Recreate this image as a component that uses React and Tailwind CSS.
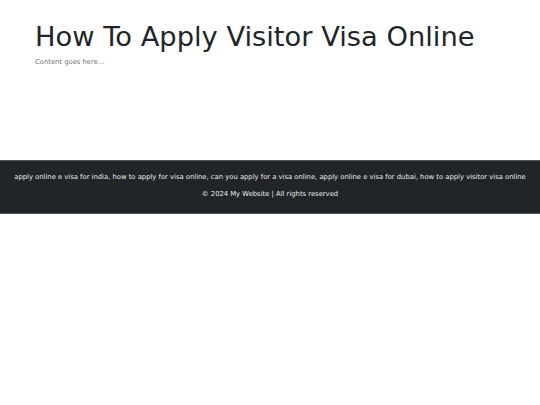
export default function App() {
  return (
    <div className="bg-white" style={{ fontFamily: '"DejaVu Sans", Verdana, sans-serif' }}>
      <main className="px-[35px] pt-[20px] h-[160px]">
        <h1 className="text-[27.3px] leading-[34px] text-[#212529] font-normal">How To Apply Visitor Visa Online</h1>
        <p className="text-[6.8px] leading-[10px] text-[#6c757d] mt-[3px]">Content goes here...</p>
      </main>
      <footer className="bg-[#212529] text-[#e9ecef] text-center h-[54px] border-t border-b border-[#50565c] pt-[11px]">
        <p className="text-[6.8px] leading-[10px]">apply online e visa for india, how to apply for visa online, can you apply for a visa online, apply online e visa for dubai, how to apply visitor visa online</p>
        <p className="text-[6.8px] leading-[10px] mt-[7px]">© 2024 My Website | All rights reserved</p>
      </footer>
    </div>
  );
}
